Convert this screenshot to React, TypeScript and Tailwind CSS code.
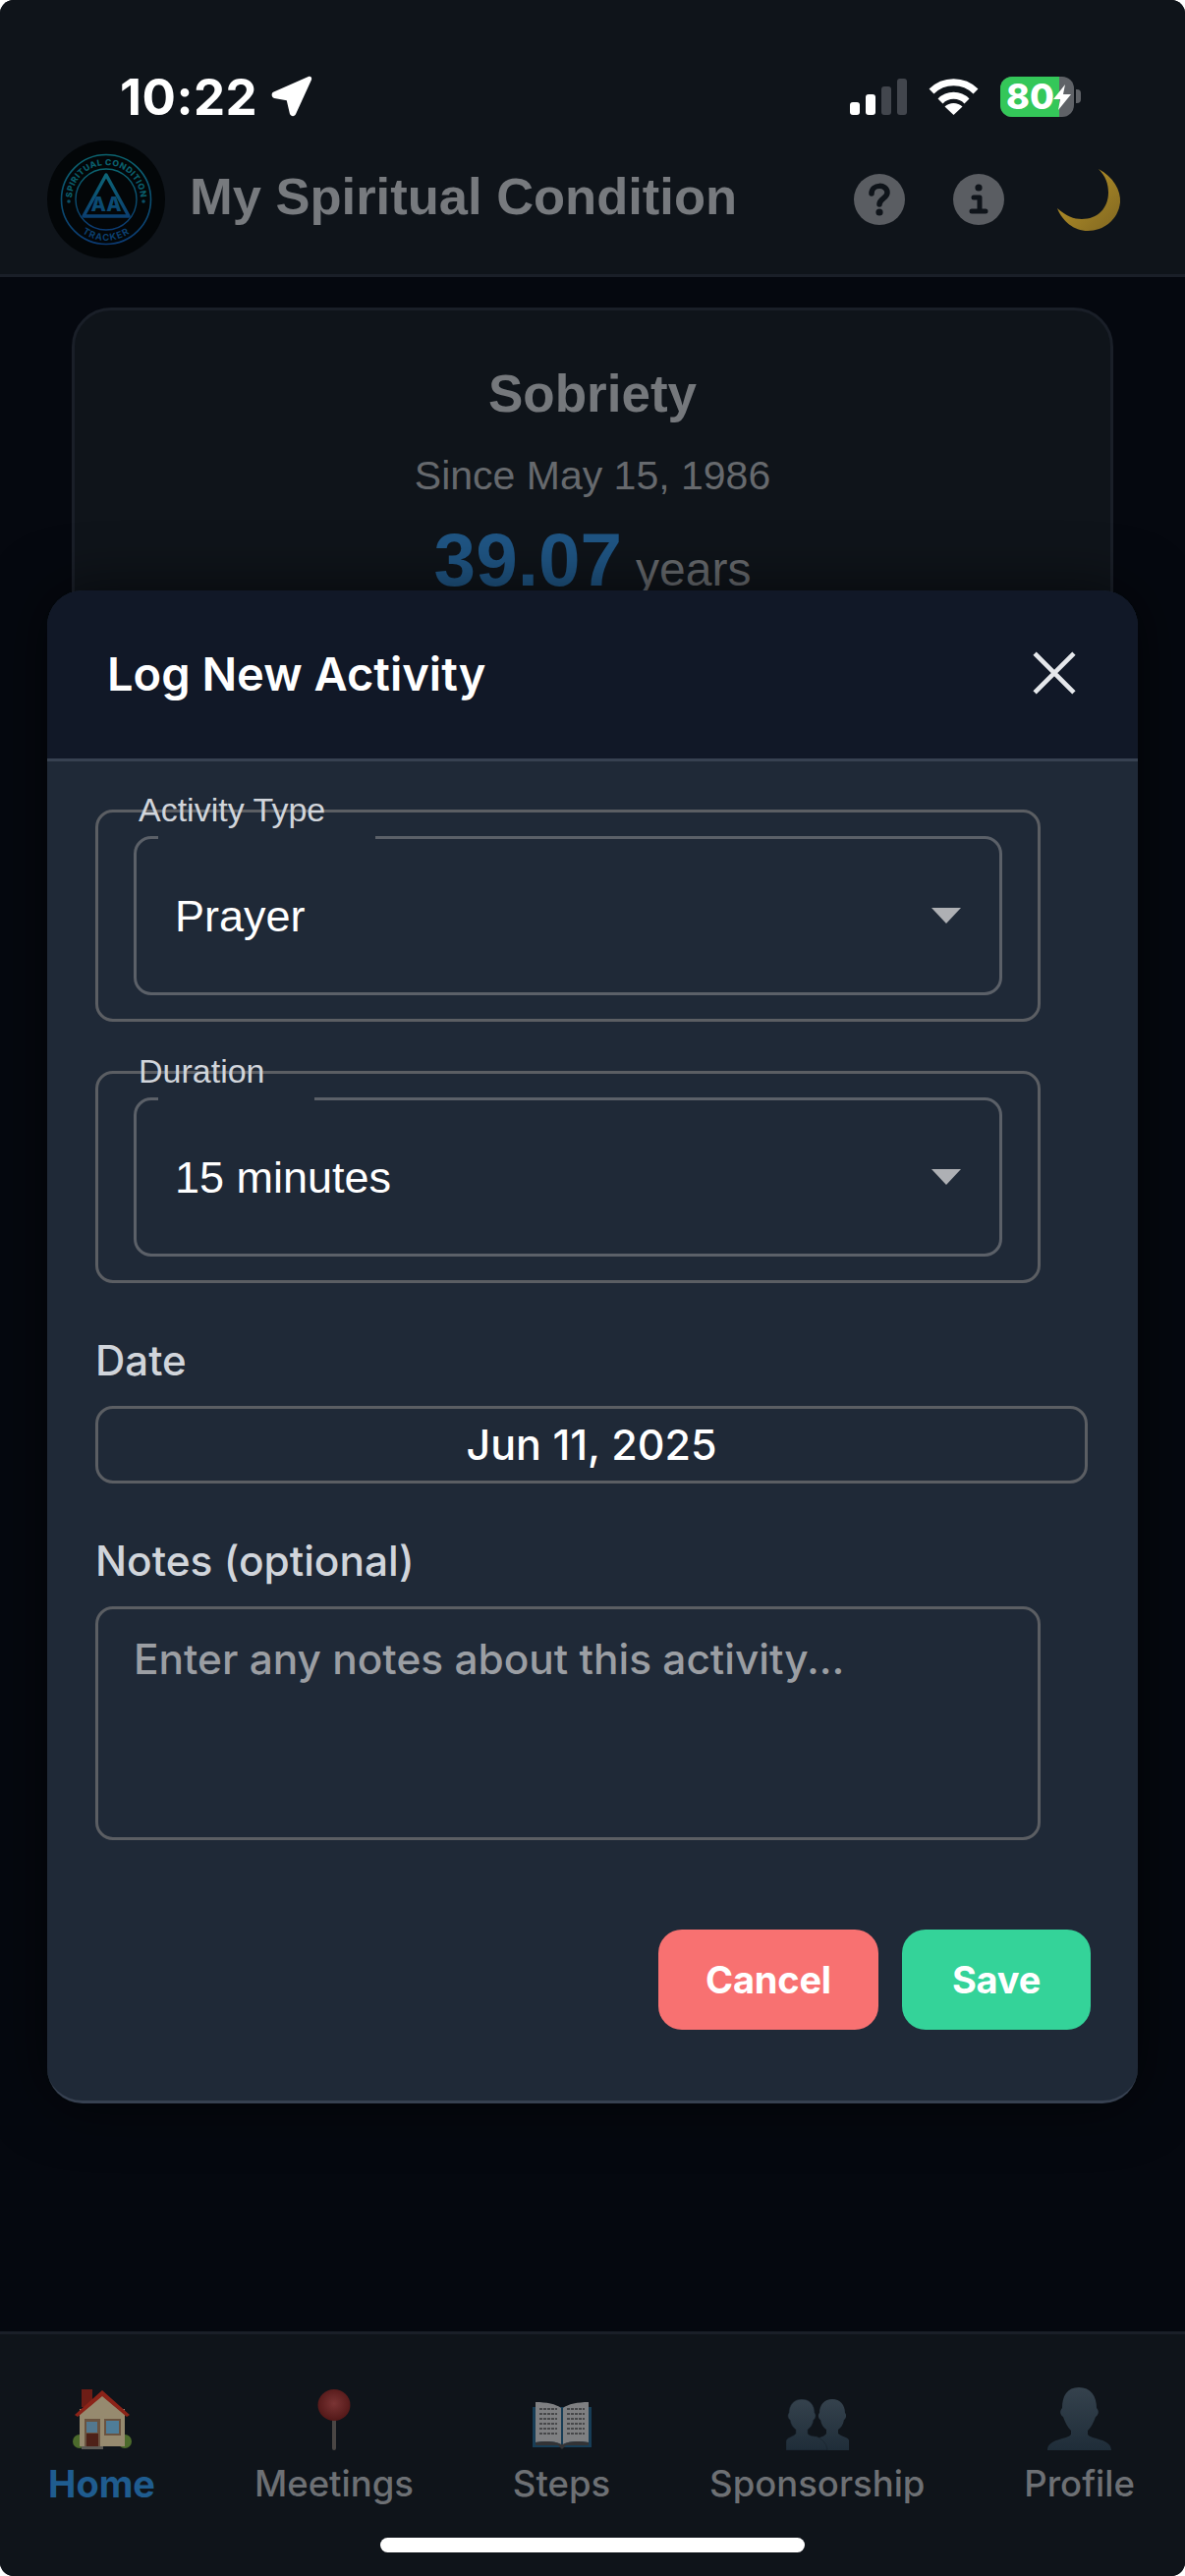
const inter = "font-['Inter',sans-serif]"
const helv = "font-['Liberation_Sans',Arial,sans-serif]"

const SignalIcon = () => (
  <svg width="58" height="37" viewBox="0 0 58 37">
    <rect x="0" y="24" width="10" height="13" rx="3" fill="#fff" />
    <rect x="16" y="16" width="10" height="21" rx="3" fill="#fff" />
    <rect x="32" y="8" width="10" height="29" rx="3" fill="#42464d" />
    <rect x="48" y="0" width="10" height="37" rx="3" fill="#42464d" />
  </svg>
)

const WifiIcon = () => (
  <svg width="51" height="37" viewBox="0 0 51 37">
    <path d="M3 13 A32 32 0 0 1 48 13" fill="none" stroke="#fff" strokeWidth="7" />
    <path d="M12 23 A19 19 0 0 1 39 23" fill="none" stroke="#fff" strokeWidth="7" />
    <path d="M25.5 37 L16.5 28.5 A13 13 0 0 1 34.5 28.5 Z" fill="#fff" />
  </svg>
)

const Battery = () => (
  <div className="flex items-center">
    <div className="relative h-[41px] w-[75px] rounded-[12px] bg-[#5f6267]">
      <div className="flex h-full w-[60px] items-center rounded-l-[12px] bg-[#34c759] pl-[6px]">
        <span className={`${inter} text-[36px] font-extrabold leading-none text-white`}>80</span>
      </div>
      <svg className="absolute left-[54px] top-[8px]" width="18" height="26" viewBox="0 0 18 26">
        <path d="M12 0 L0 15 H7 L5 26 L18 10 H10 Z" fill="#fff" />
      </svg>
    </div>
    <div className="ml-[2px] h-[14px] w-[5px] rounded-r-[4px] bg-[#5f6267]" />
  </div>
)

const Logo = () => (
  <svg width="120" height="120" viewBox="0 0 120 120" className="shrink-0">
    <defs>
      <linearGradient id="ring" x1="0" y1="0" x2="0" y2="1">
        <stop offset="0" stopColor="#0b6470" />
        <stop offset="1" stopColor="#0b3a72" />
      </linearGradient>
      <linearGradient id="tri" x1="0" y1="0" x2="0" y2="1">
        <stop offset="0" stopColor="#0d6576" />
        <stop offset="1" stopColor="#0b3f70" />
      </linearGradient>
      <path id="topArc" d="M27.1 72 A35 35 0 1 1 92.9 72" />
      <path id="bottomArc" d="M25.6 84 A42 42 0 0 0 94.4 84" />
    </defs>
    <circle cx="60" cy="60" r="60" fill="#030608" />
    <circle cx="60" cy="60" r="45.5" fill="none" stroke="url(#ring)" strokeWidth="1.6" />
    <circle cx="60" cy="60" r="31" fill="none" stroke="url(#ring)" strokeWidth="1.4" />
    <text fontSize="8.6" fontWeight="800" fontFamily="Inter" fill="#0a5f6c" letterSpacing="0.5">
      <textPath href="#topArc" startOffset="50%" textAnchor="middle">SPIRITUAL CONDITION</textPath>
    </text>
    <text fontSize="9.5" fontWeight="700" fontFamily="Inter" fill="#0b3f6e" letterSpacing="1">
      <textPath href="#bottomArc" startOffset="50%" textAnchor="middle">TRACKER</textPath>
    </text>
    <path d="M60 35 L83 77 H37 Z" fill="none" stroke="url(#tri)" strokeWidth="3.5" strokeLinejoin="round" />
    <text x="60" y="72" textAnchor="middle" fontSize="20" fontWeight="800" fontFamily="Inter" fill="#0b4a72">AA</text>
    <circle cx="22" cy="62" r="1.8" fill="#0b4f66" />
    <circle cx="98" cy="62" r="1.8" fill="#0b4f66" />
  </svg>
)

const HelpIcon = () => (
  <svg width="52" height="52" viewBox="0 0 52 52">
    <circle cx="26" cy="26" r="26" fill="#5a5d62" />
    <path d="M18 20 C18 10 34 10 34 19 C34 25 26 25 26 31" fill="none" stroke="#0f141a" strokeWidth="5.5" strokeLinecap="round" />
    <circle cx="26" cy="39" r="3.6" fill="#0f141a" />
  </svg>
)

const InfoIcon = () => (
  <svg width="52" height="52" viewBox="0 0 52 52">
    <circle cx="26" cy="26" r="26" fill="#5a5d62" />
    <circle cx="26" cy="14" r="3.6" fill="#0f141a" />
    <path d="M21 24 H27 V38 M19 38 H33" fill="none" stroke="#0f141a" strokeWidth="5" strokeLinecap="round" strokeLinejoin="round" />
  </svg>
)

const MoonIcon = () => (
  <svg width="66" height="66" viewBox="0 0 66 66">
    <defs>
      <linearGradient id="moon" x1="0" y1="0" x2="1" y2="1">
        <stop offset="0.4" stopColor="#a58526" />
        <stop offset="1" stopColor="#806621" />
      </linearGradient>
    </defs>
    <path d="M43 2 C58 10 66 24 65 36 C63 54 48 65 32 65 C18 65 6 55 1 42 C10 50 18 53 26 53 C42 53 53 42 53 26 C53 17 50 9 43 2 Z" fill="url(#moon)" />
  </svg>
)

const HomeEmoji = () => (
  <svg width="62" height="62" viewBox="0 0 62 62">
    <circle cx="8" cy="53" r="7" fill="#4c6b2c" />
    <circle cx="54" cy="53" r="7" fill="#4c6b2c" />
    <rect x="10" y="0" width="11" height="18" fill="#6d1d16" />
    <rect x="8" y="20" width="46" height="38" fill="#968a6f" />
    <path d="M31 6 L8 26 H54 Z" fill="#968a6f" />
    <path d="M3 26 L31 1 L59 26 L56 28 L31 7 L6 28 Z" fill="#8c2318" />
    <rect x="13" y="30" width="16" height="29" fill="#6a5340" />
    <rect x="15" y="45" width="12" height="14" fill="#4e2118" />
    <rect x="15" y="33" width="11" height="11" fill="#53788f" />
    <rect x="33" y="30" width="17" height="17" fill="#6a5340" />
    <rect x="35" y="32" width="13" height="13" fill="#4f7d98" />
    <rect x="10" y="58" width="22" height="3" fill="#5c5a55" />
  </svg>
)

const PinEmoji = () => (
  <svg width="34" height="62" viewBox="0 0 34 62">
    <defs>
      <radialGradient id="pin" cx="0.5" cy="0.45" r="0.6">
        <stop offset="0" stopColor="#7a3434" />
        <stop offset="1" stopColor="#4f1515" />
      </radialGradient>
    </defs>
    <rect x="15" y="28" width="4" height="34" rx="2" fill="#4a4644" />
    <ellipse cx="17" cy="16" rx="16.5" ry="16" fill="url(#pin)" />
  </svg>
)

const BookEmoji = () => (
  <svg width="60" height="50" viewBox="0 0 60 50">
    <path d="M0 6 V47 H60 V6 Z" fill="#173d56" />
    <path d="M3 1 C14 1 24 3 29 7 V44 C24 41 14 40 3 42 Z" fill="#7f8082" />
    <path d="M57 1 C46 1 36 3 31 7 V44 C36 41 46 40 57 42 Z" fill="#7f8082" />
    <path d="M7 8 H25 M7 13 H25 M7 18 H25 M7 23 H25 M7 28 H25 M7 33 H25 M35 8 H53 M35 13 H53 M35 18 H53 M35 23 H53 M35 28 H53 M35 33 H53" stroke="#47484a" strokeWidth="1.8" strokeDasharray="3 1" />
    <path d="M3 42 C14 40 24 41 29 44 H31 C36 41 46 40 57 42 V45 H34 L30 49 L26 45 H3 Z" fill="#333335" />
  </svg>
)

const GroupEmoji = () => (
  <svg width="64" height="52" viewBox="0 0 64 52">
    <defs>
      <linearGradient id="groupFill" x1="0" y1="0" x2="0" y2="1">
        <stop offset="0" stopColor="#35424d" />
        <stop offset="1" stopColor="#1f2d39" />
      </linearGradient>
    </defs>
    <path d="M47 0 C39 0 34 6 34 14 C32 16 33 20 35 21 C36 26 38 29 41 31 V35 C39 39 30 39 26 43 V52 H64 V42 C64 39 56 38 53 35 V31 C56 29 58 26 59 21 C61 20 62 16 60 14 C60 6 55 0 47 0 Z" fill="url(#groupFill)" />
    <path d="M16 0 C8 0 3 6 3 14 C1 16 2 20 4 21 C5 26 7 29 10 31 V35 C8 38 0 39 0 43 V52 H42 C42 47 38 41 31 38 C27 38 23 37 22 35 V31 C25 29 27 26 28 21 C30 20 31 16 29 14 C29 6 24 0 16 0 Z" fill="url(#groupFill)" stroke="#17212b" strokeWidth="0.6" />
  </svg>
)

const PersonEmoji = () => (
  <svg width="65" height="64" viewBox="0 0 65 64">
    <defs>
      <linearGradient id="personFill" x1="0" y1="0" x2="0" y2="1">
        <stop offset="0" stopColor="#35424d" />
        <stop offset="1" stopColor="#1f2d39" />
      </linearGradient>
    </defs>
    <path d="M32 0 C20 0 15 9 15 21 C12 24 13 28 16 30 C18 36 21 41 24 44 V48 C21 53 0 52 0 64 H65 C65 52 44 53 41 48 V44 C44 41 47 36 49 30 C52 28 53 24 50 21 C50 9 44 0 32 0 Z" fill="url(#personFill)" />
  </svg>
)

const navItems = [
  { label: 'Home', icon: <HomeEmoji />, active: true },
  { label: 'Meetings', icon: <PinEmoji /> },
  { label: 'Steps', icon: <BookEmoji /> },
  { label: 'Sponsorship', icon: <GroupEmoji /> },
  { label: 'Profile', icon: <PersonEmoji /> },
]

const Caret = () => (
  <svg width="30" height="16" viewBox="0 0 30 16">
    <path d="M0 0 H30 L15 16 Z" fill="#aeb0b4" />
  </svg>
)

type SelectFieldProps = {
  label: string
  value: string
  notchWidth: string
}

const SelectField = ({ label, value, notchWidth }: SelectFieldProps) => (
  <div className="relative h-[216px] w-[962px] rounded-[18px] border-[3px] border-[#5b5e63] pt-[24px] pl-[36px]">
    <span className={`${helv} absolute left-[41px] top-[-23px] text-[34px] leading-[40px] text-[#d1d5db]`}>{label}</span>
    <div className="relative flex h-[162px] w-[884px] items-center justify-between rounded-[18px] border-[3px] border-[#5b6068] pr-[39px] pl-[39px]">
      <span className={`absolute left-[22px] top-[-3px] h-[3px] bg-[#1f2937] ${notchWidth}`} />
      <span className={`${helv} text-[45px] leading-none text-white`}>{value}</span>
      <Caret />
    </div>
  </div>
)

export default function App() {
  return (
    <div className="h-[2622px] w-[1206px] bg-white">
      <div className="relative flex h-[2622px] w-[1206px] flex-col overflow-hidden rounded-[14px] bg-[#05080f]">
        <header className="h-[282px] shrink-0 border-b-[3px] border-[#1a1f28] bg-[#0f141a]">
          <div className="mt-[74px] flex h-[48px] items-center justify-between pr-[106px] pl-[122px]">
            <div className="flex items-center gap-[14px]">
              <span className={`${inter} text-[51px] font-bold leading-none tracking-[0.5px] text-white`}>10:22</span>
              <svg width="42" height="42" viewBox="0 0 40 40">
                <path d="M36 1 C38 0 40 2 39 4 L24 37 C23 40 19 40 18 37 L15 24 L3 22 C0 21 0 17 2 16 Z" fill="#fff" />
              </svg>
            </div>
            <div className="flex items-center gap-[22px]">
              <SignalIcon />
              <WifiIcon />
              <Battery />
            </div>
          </div>
          <div className="mt-[21px] flex items-center pr-[65px] pl-[48px]">
            <Logo />
            <h1 className={`${helv} ml-[25px] flex-1 pb-[5px] text-[52.5px] font-bold leading-none text-[#777a7e]`}>My Spiritual Condition</h1>
            <div className="flex items-center">
              <HelpIcon />
              <div className="ml-[49px]"><InfoIcon /></div>
              <div className="ml-[53px]"><MoonIcon /></div>
            </div>
          </div>
        </header>

        <main className="flex-1 overflow-hidden px-[73px] pt-[31px]">
          <section className="flex h-[700px] flex-col items-center rounded-[40px] border-[3px] border-[#1a1f28] bg-[#0f141a] pt-[53px]">
            <h2 className={`${helv} text-[53px] font-bold leading-[64px] text-[#75787c]`}>Sobriety</h2>
            <p className={`${helv} mt-[28px] text-[41px] leading-[46px] text-[#66696d]`}>Since May 15, 1986</p>
            <p className={`${helv} mt-[25px] flex items-baseline gap-[14px] leading-none`}>
              <span className="text-[76.5px] font-bold text-[#1f5584]">39.07</span>
              <span className="text-[48px] text-[#66696d]">years</span>
            </p>
          </section>
        </main>

        <nav className="relative h-[249px] shrink-0 border-t-[3px] border-[#1a1f28] bg-[#0f141a] pt-[52px]">
          <ul className="flex justify-between pr-[51px] pl-[49px]">
            {navItems.map((item) => (
              <li key={item.label} className="flex flex-col items-center">
                <div className="flex h-[66px] items-end">{item.icon}</div>
                <span className={`${inter} mt-[12px] leading-[44px] ${item.active ? 'text-[38px] font-bold text-[#1f5c8f]' : 'text-[36.5px] font-medium text-[#6d7074]'}`}>{item.label}</span>
              </li>
            ))}
          </ul>
          <div className="absolute bottom-[24px] left-[387px] h-[15px] w-[432px] rounded-full bg-white" />
        </nav>

        <div className="absolute top-[601px] left-[48px] h-[1540px] w-[1110px] overflow-hidden rounded-[36px] border-b-[3px] border-[#374151] bg-[#1f2937] shadow-[0_0_60px_rgba(0,0,0,0.6)]">
          <div className="flex h-[174px] items-center justify-between border-b-[3px] border-[#374151] bg-[#111827] pr-[63px] pl-[61px]">
            <h3 className={`${inter} pb-[3px] text-[47px] font-semibold leading-none text-white`}>Log New Activity</h3>
            <svg width="44" height="44" viewBox="0 0 42 42" className="mb-[4px]">
              <path d="M2 2 L40 40 M40 2 L2 40" stroke="#e5e7eb" strokeWidth="4.5" />
            </svg>
          </div>
          <div className="pt-[49px] pr-[48px] pl-[49px]">
            <SelectField label="Activity Type" value="Prayer" notchWidth="w-[221px]" />
            <div className="mt-[50px]">
              <SelectField label="Duration" value="15 minutes" notchWidth="w-[159px]" />
            </div>
            <label className={`${inter} mt-[54px] block text-[42px] font-medium leading-[50px] text-[#d1d5db]`}>Date</label>
            <div className={`${inter} mt-[21px] flex h-[79px] w-[1010px] items-center justify-center rounded-[18px] border-[3px] border-[#5b5e63] text-[43px] font-medium text-white`}>Jun 11, 2025</div>
            <label className={`${inter} mt-[54px] block text-[42.4px] font-medium leading-[50px] text-[#d1d5db]`}>Notes (optional)</label>
            <textarea
              readOnly
              placeholder="Enter any notes about this activity..."
              className={`${inter} mt-[21px] block h-[238px] w-[962px] resize-none rounded-[18px] border-[3px] border-[#5b5e63] bg-transparent px-[36px] py-[27px] text-[42.4px] font-medium leading-[48px] outline-none placeholder:text-[#9b9ea3]`}
            />
            <div className="mt-[91px] flex justify-end gap-[24px]">
              <button className={`${inter} h-[102px] w-[224px] rounded-[24px] bg-[#f87171] text-[38px] font-bold tracking-[-0.2px] text-white`}>Cancel</button>
              <button className={`${inter} h-[102px] w-[192px] rounded-[24px] bg-[#34d399] text-[38px] font-bold tracking-[-0.2px] text-white`}>Save</button>
            </div>
          </div>
        </div>
      </div>
    </div>
  )
}
